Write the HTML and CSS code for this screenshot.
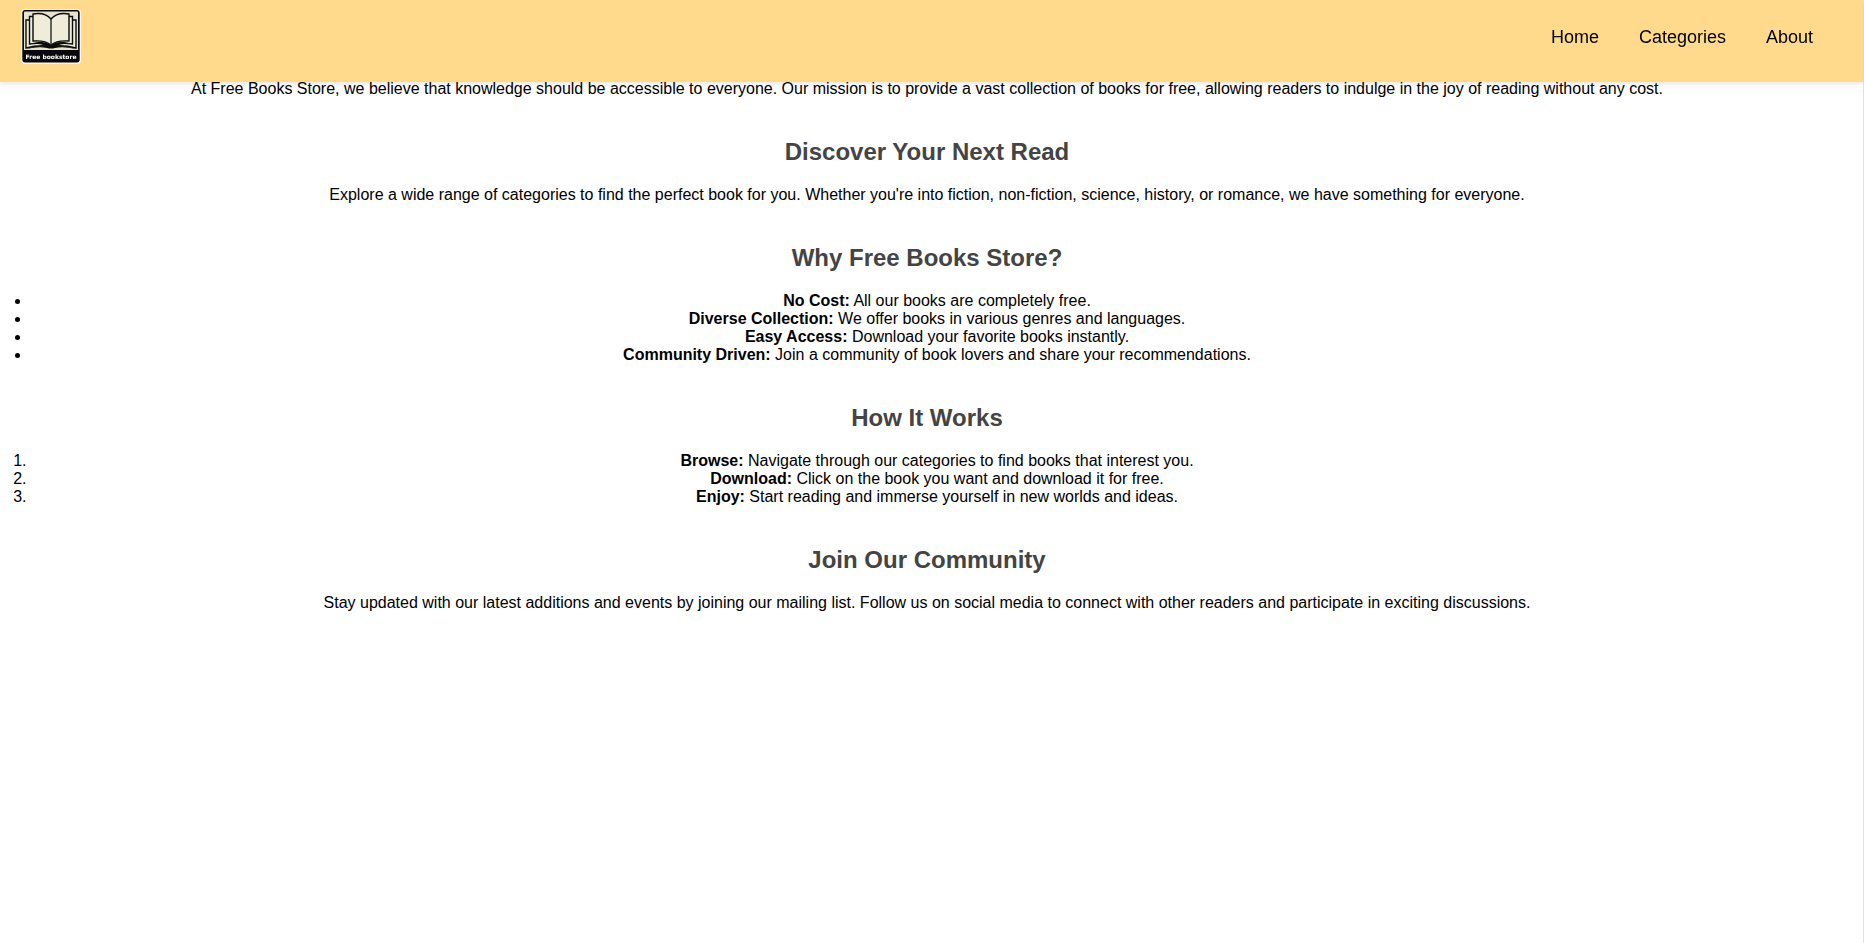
FILE: index.html
```html
<!DOCTYPE html>
<html lang="en">
<head>
<meta charset="utf-8">
<title>Free Books Store</title>
<link rel="stylesheet" href="styles.css">
</head>
<body>
<header class="site-header">
  <a class="logo" href="#" aria-label="Free bookstore">
    <svg class="logo-image" viewBox="0 0 60 55" width="60" height="55">
      <rect width="60" height="55" rx="4" fill="#fdf6e6"/>
      <rect x="1.300" y="1" width="57.400" height="52.500" rx="3" fill="#08080c"/>
      <path d="M4 2.600H56Q57 2.600 57 3.600V41H3V3.600Q3 2.600 4 2.600Z" fill="#e6e4d0"/>
      <g fill="#efedda" stroke="#0b0b0b" stroke-width="1.400">
        <path d="M9 11H5V39Q18 35.500 30 37.500Q42 35.500 55 39V11H51"/>
        <path d="M12 7.500H8.500V35Q21 33 30 37Q39 33 51.500 35V7.500H48"/>
        <path d="M12 5Q24 3 30 10Q36 3 48 5V32Q36 31 30 36Q24 31 12 32Z"/>
      </g>
      <path d="M30 10V36" stroke="#333" stroke-width="1.500"/>
      <path d="M12 33Q24 32 30 36Q36 32 48 33Q40 34 36 37Q48 37 55 40Q42 37 34 39Q30 40 26 39Q18 37 5 40Q12 37 24 37Q20 34 12 33Z" fill="#0b0b0b"/>
      <text class="logo-text" x="30" y="50" text-anchor="middle">Free bookstore</text>
    </svg>
  </a>
  <nav class="site-nav">
    <a href="#">Home</a>
    <a href="#">Categories</a>
    <a href="#">About</a>
  </nav>
</header>
<main class="content">
  <p>At Free Books Store, we believe that knowledge should be accessible to everyone. Our mission is to provide a vast collection of books for free, allowing readers to indulge in the joy of reading without any cost.</p>
  <h2>Discover Your Next Read</h2>
  <p>Explore a wide range of categories to find the perfect book for you. Whether you're into fiction, non-fiction, science, history, or romance, we have something for everyone.</p>
  <h2>Why Free Books Store?</h2>
  <ul>
    <li><strong>No Cost:</strong> All our books are completely free.</li>
    <li><strong>Diverse Collection:</strong> We offer books in various genres and languages.</li>
    <li><strong>Easy Access:</strong> Download your favorite books instantly.</li>
    <li><strong>Community Driven:</strong> Join a community of book lovers and share your recommendations.</li>
  </ul>
  <h2>How It Works</h2>
  <ol>
    <li><strong>Browse:</strong> Navigate through our categories to find books that interest you.</li>
    <li><strong>Download:</strong> Click on the book you want and download it for free.</li>
    <li><strong>Enjoy:</strong> Start reading and immerse yourself in new worlds and ideas.</li>
  </ol>
  <h2>Join Our Community</h2>
  <p>Stay updated with our latest additions and events by joining our mailing list. Follow us on social media to connect with other readers and participate in exciting discussions.</p>
</main>
</body>
</html>
```
FILE: styles.css
```css
* {
  box-sizing: border-box;
  margin: 0;
  padding: 0;
}

body {
  min-height: 100vh;
  border-right: 1px solid #e2e2e2;
  background: #fff;
  color: #000;
  font-family: "Liberation Sans", Arial, sans-serif;
  font-size: 16px;
  line-height: 18px;
}

.site-header {
  position: fixed;
  top: 0;
  left: 0;
  right: 1px;
  display: flex;
  justify-content: space-between;
  align-items: center;
  padding: 9px 50px 18px 21px;
  background: #ffda8c;
  box-shadow: 0 2px 5px rgba(0, 0, 0, 0.1);
}

.logo,
.logo-image {
  display: block;
}

.logo-text {
  fill: #fff;
  font-family: "DejaVu Sans", sans-serif;
  font-size: 6px;
  font-weight: bold;
}

.site-nav {
  display: flex;
  gap: 40px;
}

.site-nav a {
  color: #000;
  font-size: 18px;
  text-decoration: none;
}

.content {
  padding: 80px 20px 40px 11px;
  text-align: center;
}

.content h2 {
  margin: 40px 0 20px;
  color: #444;
  font-size: 24px;
  line-height: 28px;
}

.content ul,
.content ol {
  padding-left: 20px;
}
```
